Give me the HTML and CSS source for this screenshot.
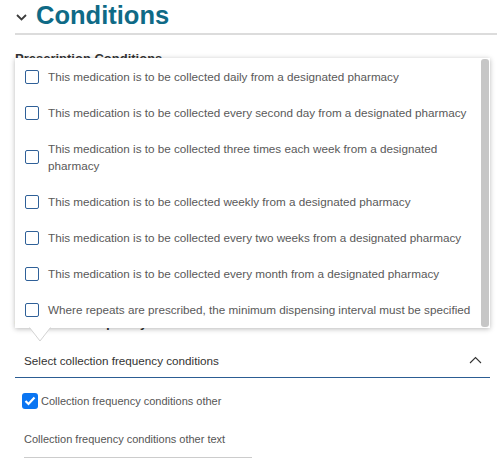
FILE: index.html
```html
<!DOCTYPE html>
<html lang="en">
<head>
<meta charset="utf-8">
<title>Conditions</title>
<link rel="stylesheet" href="styles.css">
</head>
<body>
<div class="page">
  <div class="heading">
    <svg class="heading-chevron" width="11" height="7" viewBox="0 0 11 7"><polyline points="1,1 5.5,5.5 10,1" fill="none" stroke="#3c3c3c" stroke-width="1.8"/></svg>
    <h1 class="heading-title">Conditions</h1>
  </div>
  <div class="form">
    <section class="section-prescription">
      <div class="field-label">Prescription Conditions</div>
    </section>
    <section class="section-frequency">
      <div class="field-label">Collection Frequency</div>
      <div class="select-wrap">
        <div class="select">
          <span class="select-text">Select collection frequency conditions</span>
          <svg class="select-chevron" width="13" height="8" viewBox="0 0 13 8"><polyline points="1,7 6.5,1.5 12,7" fill="none" stroke="#333" stroke-width="1.1"/></svg>
        </div>
        <div class="popup">
          <ul class="option-list">
            <li class="option"><span class="box"></span><span class="option-text">This medication is to be collected daily from a designated pharmacy</span></li>
            <li class="option"><span class="box"></span><span class="option-text">This medication is to be collected every second day from a designated pharmacy</span></li>
            <li class="option"><span class="box"></span><span class="option-text">This medication is to be collected three times each week from a designated pharmacy</span></li>
            <li class="option"><span class="box"></span><span class="option-text">This medication is to be collected weekly from a designated pharmacy</span></li>
            <li class="option"><span class="box"></span><span class="option-text">This medication is to be collected every two weeks from a designated pharmacy</span></li>
            <li class="option"><span class="box"></span><span class="option-text">This medication is to be collected every month from a designated pharmacy</span></li>
            <li class="option"><span class="box"></span><span class="option-text">Where repeats are prescribed, the minimum dispensing interval must be specified</span></li>
          </ul>
          <div class="scrollbar"></div>
          <svg class="popup-tail" width="22" height="15" viewBox="0 0 22 15"><polygon points="0,0 11,14 22,0" fill="#fff"/><polyline points="0.5,0.5 11,14 21.5,0.5" fill="none" stroke="#d2d2d2" stroke-width="1"/></svg>
        </div>
      </div>
      <div class="check-row">
        <span class="check"><svg width="12" height="10" viewBox="0 0 12 10"><polyline points="1.5,5 4.5,8 10.5,1.5" fill="none" stroke="#fff" stroke-width="2.2"/></svg></span>
        <span class="check-label">Collection frequency conditions other</span>
      </div>
      <div class="text-field">
        <div class="text-label">Collection frequency conditions other text</div>
        <div class="text-input"></div>
      </div>
    </section>
  </div>
</div>
</body>
</html>
```

FILE: styles.css
```css
body {
  margin: 0;
  background: #ffffff;
  font-family: "Liberation Sans", Arial, sans-serif;
}

.page {
  padding-left: 15px;
}

.heading {
  display: flex;
  align-items: flex-start;
  height: 30px;
  padding-bottom: 3px;
  border-bottom: 2px solid #dcdcdc;
}

.heading-chevron {
  margin-top: 14px;
  margin-left: 1px;
  flex: none;
}

.heading-title {
  margin: 0 0 0 9px;
  font-size: 25.5px;
  line-height: 30px;
  font-weight: bold;
  color: #0f6a86;
}

.form {
  padding-right: 7px;
}

.section-prescription {
  box-sizing: border-box;
  height: 280px;
  padding-top: 16px;
}

.field-label {
  font-size: 13px;
  line-height: 16px;
  font-weight: bold;
  color: #333333;
}

.select-wrap {
  position: relative;
  margin-top: 12px;
}

.select {
  display: flex;
  align-items: center;
  justify-content: space-between;
  height: 34px;
  padding: 0 9px;
  border-bottom: 1px solid #2c5d93;
  font-size: 11.7px;
  color: #333333;
}

.select-chevron {
  margin-top: -1px;
  margin-right: -1px;
}

.popup {
  position: absolute;
  left: 0;
  right: 0;
  bottom: calc(100% + 15px);
  height: 270px;
  box-sizing: border-box;
  display: flex;
  background: #ffffff;
  box-shadow: 0 1px 5px rgba(0, 0, 0, 0.28);
}

.option-list {
  flex: 1;
  list-style: none;
  margin: 0;
  padding: 1px 0 0 0;
}

.option {
  display: flex;
  align-items: center;
  padding: 9px 4px 10px 10px;
  font-size: 11.7px;
  line-height: 17px;
  color: #595959;
}

.box {
  flex: none;
  width: 14px;
  height: 14px;
  box-sizing: border-box;
  border: 1.5px solid #2f6098;
  border-radius: 2px;
  margin-right: 9px;
}

.scrollbar {
  flex: none;
  width: 8px;
  margin: 1px 1px 1px 0;
  background: #c6c6c6;
  border-radius: 3px;
}

.popup-tail {
  position: absolute;
  left: 14px;
  top: calc(100% - 1px);
}

.check-row {
  display: flex;
  align-items: center;
  margin-top: 15px;
  margin-left: 7px;
  gap: 3px;
}

.check {
  flex: none;
  width: 16px;
  height: 16px;
  background: #0a75f2;
  border-radius: 3px;
  display: flex;
  align-items: center;
  justify-content: center;
}

.check-label {
  font-size: 11px;
  line-height: 16px;
  color: #555555;
}

.text-field {
  margin-left: 9px;
  margin-top: 22px;
  width: 228px;
}

.text-label {
  font-size: 11px;
  line-height: 16px;
  color: #555555;
}

.text-input {
  height: 10px;
  border-bottom: 1px solid #cccccc;
}
```
